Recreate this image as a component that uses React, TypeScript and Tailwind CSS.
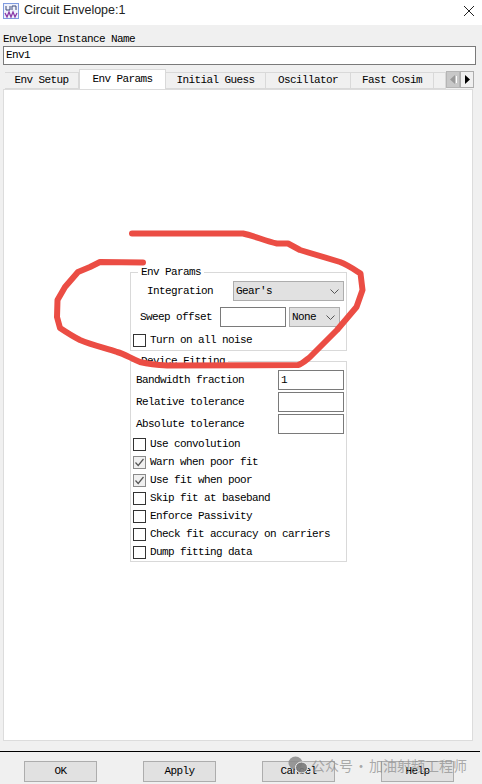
const tabs = [
  { label: "Env Setup", w: "w-[74px]" },
  { label: "Env Params", w: "w-[87px]", active: true },
  { label: "Initial Guess", w: "w-[100px]" },
  { label: "Oscillator", w: "w-[85px]" },
  { label: "Fast Cosim", w: "w-[83px]" },
  { label: "", w: "w-[12px]" },
];

const fitChecks = [
  { label: "Use convolution", checked: false },
  { label: "Warn when poor fit", checked: true },
  { label: "Use fit when poor", checked: true },
  { label: "Skip fit at baseband", checked: false },
  { label: "Enforce Passivity", checked: false },
  { label: "Check fit accuracy on carriers", checked: false },
  { label: "Dump fitting data", checked: false },
];

const Chevron = () => (
  <svg width="9" height="5" viewBox="0 0 9 5" fill="none" stroke="#555" strokeWidth="1">
    <path d="M0.5 0.5 L4.5 4.5 L8.5 0.5" />
  </svg>
);

function Check({ checked, label }: { checked: boolean; label: string }) {
  return (
    <div className="flex items-center h-[18px]">
      <div className={"w-[13px] h-[13px] border flex items-center justify-center mr-[4px] " + (checked ? "border-[#8a8a8a] bg-[#f0f0f0]" : "border-[#333333] bg-white")}>
        {checked && (
          <svg width="11" height="11" viewBox="0 0 11 11" fill="none" stroke="#555" strokeWidth="1.2">
            <path d="M1.5 5.5 L4.2 8.5 L9.5 2" />
          </svg>
        )}
      </div>
      <span>{label}</span>
    </div>
  );
}

function Select({ value, w }: { value: string; w: string }) {
  return (
    <div className={"h-[20px] border border-[#adadad] bg-[#e1e1e1] flex items-center justify-between pl-[2px] pr-[4px] " + w}>
      <span>{value}</span>
      <Chevron />
    </div>
  );
}

function TextRow({ label, value }: { label: string; value?: string }) {
  return (
    <div className="flex items-center justify-between h-[20px] mb-[2px]">
      <span className="ml-[3px]">{label}</span>
      <div className="w-[66px] h-[20px] border border-[#7a7a7a] bg-white pl-[2px] leading-[18px]">{value}</div>
    </div>
  );
}

function FootButton({ label }: { label: string }) {
  return (
    <button className="w-[73px] h-[21px] border border-[#adadad] bg-[#e1e1e1] text-black leading-[19px]">{label}</button>
  );
}

export default function App() {
  return (
    <div className="relative w-[482px] h-[784px] overflow-hidden bg-[#f0f0f0] text-black text-[11px] tracking-[-0.6px] font-['Liberation_Mono',monospace]">
      {/* title bar */}
      <div className="h-[25px] bg-white flex items-center pl-[3px] pr-[8px] pb-[4px]">
        <svg width="16" height="16" viewBox="0 0 16 16" fill="none" className="mr-[5px]">
          <rect x="0.5" y="0.5" width="15" height="15" fill="#eef1fb" stroke="#7f9be0" />
          <path d="M3 3 V7 H7 V3 M9 7 V3 H13 V7" stroke="#3d4a78" />
          <path d="M2 10 L4 14 L6 9 L8 14 L10 9 L12 14 L14 10" stroke="#8a3aa8" strokeWidth="1.3" />
        </svg>
        <span className="text-[12.5px] tracking-normal text-[#222] font-['Liberation_Sans',sans-serif] flex-1">Circuit Envelope:1</span>
        <svg width="10" height="10" viewBox="0 0 10 10" stroke="#222" strokeWidth="1">
          <path d="M0 0 L10 10 M10 0 L0 10" />
        </svg>
      </div>

      <div className="h-[14px] pl-[3px] pt-[7px] leading-[14px] box-content">Envelope Instance Name</div>
      <div className="mx-[3px] h-[19px] w-[473px] border border-[#7a7a7a] bg-white pl-[2px] leading-[17px]">Env1</div>

      {/* tabs */}
      <div className="relative flex pl-[5px] h-[18px] mt-[6px] items-end">
        {tabs.map((t) =>
          t.active ? (
            <div key={t.w} className={"relative z-10 h-[20px] -mt-[2px] bg-white border border-b-0 border-[#d9d9d9] flex items-center justify-center " + t.w}>{t.label}</div>
          ) : (
            <div key={t.label + t.w} className={"h-[17px] bg-[#f0f0f0] border border-l-0 border-[#d9d9d9] flex items-center justify-center " + t.w}>{t.label}</div>
          )
        )}
        <div className="absolute left-[446px] top-0 flex h-[17px]">
          <div className="w-[14px] bg-[#c8c8c8] border border-[#b5b5b5] flex items-center justify-center gap-[1px]">
            <svg width="5" height="9"><path d="M5 0 V9 L0 4.5 Z" fill="#999" /></svg>
            <div className="w-[1px] h-[7px] bg-white" />
          </div>
          <div className="w-[14px] bg-[#f0f0f0] border border-[#adadad] flex items-center justify-center">
            <svg width="5" height="9"><path d="M0 0 V9 L5 4.5 Z" fill="#000" /></svg>
          </div>
        </div>
      </div>

      {/* panel */}
      <div className="ml-[3px] w-[470px] h-[652px] bg-white border border-[#dcdcdc] pt-[182px] pl-[126px]">
        <div className="relative w-[217px] h-[79px] border border-[#d9d9d9] pl-[9px] pt-[8px]">
          <span className="absolute left-[7px] -top-[9px] bg-white px-[3px]">Env Params</span>
          <div className="flex items-center h-[20px]">
            <span className="ml-[7px] w-[86px]">Integration</span>
            <Select value="Gear's" w="w-[111px]" />
          </div>
          <div className="flex items-center h-[20px] mt-[6px]">
            <span className="w-[80px]">Sweep offset</span>
            <div className="w-[66px] h-[20px] border border-[#7a7a7a] bg-white mr-[3px]" />
            <Select value="None" w="w-[51px]" />
          </div>
          <div className="-ml-[7px] mt-[4px]">
            <Check checked={false} label="Turn on all noise" />
          </div>
        </div>

        <div className="relative w-[217px] h-[201px] mt-[10px] border border-[#d9d9d9] pl-[2px] pr-[2px] pt-[8px]">
          <span className="absolute left-[7px] -top-[9px] bg-white px-[3px]">Device Fitting</span>
          <TextRow label="Bandwidth fraction" value="1" />
          <TextRow label="Relative tolerance" />
          <TextRow label="Absolute tolerance" />
          <div className="mt-[-1px]">
            {fitChecks.map((c) => (
              <Check key={c.label} checked={c.checked} label={c.label} />
            ))}
          </div>
        </div>
      </div>

      {/* footer */}
      <div className="mt-[10px] w-[480px] border-t border-black h-[1px]" />
      <div className="flex pl-[24px] gap-[46px] mt-[9px]">
        <FootButton label="OK" />
        <FootButton label="Apply" />
        <FootButton label="Cancel" />
        <FootButton label="Help" />
      </div>

      {/* red pen annotation */}
      <svg className="absolute left-0 top-0 pointer-events-none" width="482" height="784" fill="none">
        <path
          d="M132 233.5 L243 233.5 C255 236 265 241 277 243.5 L288 243.5 L300 250 L340 262 C348 265 355 270 360.5 273.5 L362.5 290 L356.5 307 L337 330 L310 357 C305 361 302 364 298 365 L167 365.5 C155 365 148 364 140 362 C130 358 125 354 117 352 C105 348 92 345 80 340 C72 336 66 332 60 328 L57 317 L57.5 300 L65 287 L78 272 L90 267 L100 262 L143 262.5"
          stroke="#eb4d44"
          strokeWidth="6"
          strokeLinecap="round"
          strokeLinejoin="round"
        />
      </svg>

      {/* watermark */}
      <div className="absolute left-[288px] top-[756px] flex items-center whitespace-nowrap text-[14px] leading-[17px] tracking-normal text-[#8a8a8a]/70 font-['Noto_Sans_CJK_SC',sans-serif]">
        <svg width="20" height="18" viewBox="0 0 20 18" className="mr-[3px]">
          <ellipse cx="7.5" cy="7" rx="7" ry="6.5" fill="#8a8a8a" fillOpacity="0.85" />
          <ellipse cx="13.5" cy="11.5" rx="6" ry="5.5" fill="#7a7a7a" fillOpacity="0.9" stroke="#f0f0f0" strokeWidth="1" />
        </svg>
        <span>公众号</span>
        <span className="mx-[1px]">·</span>
        <span>加油射频工程师</span>
      </div>
    </div>
  );
}
